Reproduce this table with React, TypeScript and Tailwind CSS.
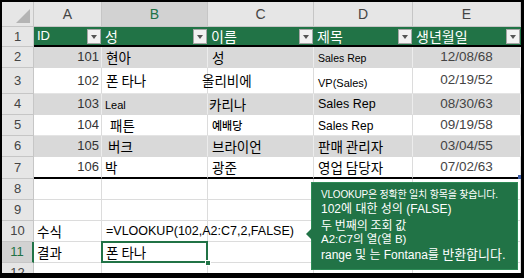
import React from 'react';

const COLS = ['w-[68px]', 'w-[106px]', 'w-[106px]', 'w-[99px]', 'w-[108px]'];
const LETTERS = ['A', 'B', 'C', 'D', 'E'];
const KR = "font-['Noto_Sans_CJK_KR',sans-serif]";
const LAT = "font-['Liberation_Sans','Noto_Sans_CJK_KR',sans-serif]";

type Row = {
  id: string;
  cells: React.ReactNode[];
  h: string;
  band: boolean;
};

const FilterBtn = () => (
  <div className="absolute right-[1px] top-[2px] w-[14px] h-[15px] bg-[#f2f2f2] border border-[#a6a6a6] flex items-center justify-center">
    <div className="w-0 h-0 border-l-[3px] border-r-[3px] border-t-[4px] border-l-transparent border-r-transparent border-t-[#555]" />
  </div>
);

const rows: Row[] = [
  {
    id: '2',
    h: 'h-[21px]',
    band: true,
    cells: [
      <span className={`${LAT} text-[13px] text-[#333] ml-auto pr-[2px]`}>101</span>,
      <span className={`${KR} text-[13.5px] pl-[4px]`}>현아</span>,
      <span className={`${KR} text-[13.5px] pl-[4px]`}>성</span>,
      <span className={`${LAT} text-[10.5px] pl-[4px] pt-[3px]`}>Sales Rep</span>,
      <span className={`${LAT} text-[13.5px] text-[#444] mx-auto`}>12/08/68</span>,
    ],
  },
  {
    id: '3',
    h: 'h-[26px]',
    band: false,
    cells: [
      <span className={`${LAT} text-[13px] text-[#333] ml-auto pr-[2px]`}>102</span>,
      <span className={`${KR} text-[13.5px] pl-[4px]`}>폰 타나</span>,
      <span className={`${KR} text-[13.5px] ml-[-6px]`}>올리비에</span>,
      <span className={`${LAT} text-[11px] pl-[4px] pt-[6px]`}>VP(Sales)</span>,
      <span className={`${LAT} text-[13.5px] text-[#444] mx-auto`}>02/19/52</span>,
    ],
  },
  {
    id: '4',
    h: 'h-[21px]',
    band: true,
    cells: [
      <span className={`${LAT} text-[13px] text-[#333] ml-auto pr-[2px]`}>103</span>,
      <span className={`${LAT} text-[11px] pl-[3px] pt-[2px]`}>Leal</span>,
      <span className={`${KR} text-[13.5px] pl-[1px]`}>카리나</span>,
      <span className={`${LAT} text-[12.5px] pl-[4px]`}>Sales Rep</span>,
      <span className={`${LAT} text-[13.5px] text-[#444] mx-auto`}>08/30/63</span>,
    ],
  },
  {
    id: '5',
    h: 'h-[21px]',
    band: false,
    cells: [
      <span className={`${LAT} text-[13px] text-[#333] ml-auto pr-[2px]`}>104</span>,
      <span className={`${KR} text-[13.5px] pl-[8px]`}>패튼</span>,
      <span className={`${KR} text-[11px] font-medium pl-[4px]`}>예배당</span>,
      <span className={`${LAT} text-[12px] pl-[4px] pt-[2px]`}>Sales Rep</span>,
      <span className={`${LAT} text-[13.5px] text-[#444] mx-auto`}>09/19/58</span>,
    ],
  },
  {
    id: '6',
    h: 'h-[21px]',
    band: true,
    cells: [
      <span className={`${LAT} text-[13px] text-[#333] ml-auto pr-[2px]`}>105</span>,
      <span className={`${KR} text-[13.5px] pl-[6px]`}>버크</span>,
      <span className={`${KR} text-[13.5px] pl-[4px]`}>브라이언</span>,
      <span className={`${KR} text-[13.5px] pl-[4px]`}>판매 관리자</span>,
      <span className={`${LAT} text-[13.5px] text-[#444] mx-auto`}>03/04/55</span>,
    ],
  },
  {
    id: '7',
    h: 'h-[22px]',
    band: false,
    cells: [
      <span className={`${LAT} text-[13px] text-[#333] ml-auto pr-[2px]`}>106</span>,
      <span className={`${KR} text-[13.5px] pl-[3px]`}>박</span>,
      <span className={`${KR} text-[13.5px] pl-[4px]`}>광준</span>,
      <span className={`${KR} text-[13.5px] pl-[4px]`}>영업 담당자</span>,
      <span className={`${LAT} text-[13.5px] text-[#444] mx-auto`}>07/02/63</span>,
    ],
  },
];

const RowHead = ({ n, h, selected }: { n: string; h: string; selected?: boolean }) => (
  <div
    className={`w-[32px] ${h} shrink-0 flex items-center justify-center ${LAT} text-[13px] border-b border-r ${
      selected
        ? 'bg-[#d2d2d2] text-[#217346] border-r-2 border-r-[#217346] border-b-[#c6c6c6]'
        : 'bg-[#e6e6e6] text-[#444] border-[#c6c6c6]'
    }`}
  >
    {n}
  </div>
);

export default function App() {
  return (
    <div className="w-[524px] h-[278px] bg-black pt-[2px] pl-[2px] pr-[3px] pb-[5px]">
      <div className="relative w-[519px] h-[271px] bg-white overflow-hidden">
        {/* column letters */}
        <div className="flex h-[25px]">
          <div className="w-[32px] shrink-0 bg-[#e6e6e6] border-r border-b border-[#c6c6c6] flex items-end justify-end p-[3px]">
            <svg width="14" height="14" viewBox="0 0 14 14">
              <polygon points="14,0 14,14 0,14" fill="#b4b4b4" />
            </svg>
          </div>
          {LETTERS.map((l, i) => (
            <div
              key={l}
              className={`${COLS[i]} shrink-0 flex items-center justify-center ${LAT} text-[14px] border-r border-b border-[#c6c6c6] ${
                l === 'B' ? 'bg-[#d2d2d2] text-[#217346]' : 'bg-[#e6e6e6] text-[#444]'
              }`}
            >
              {l}
            </div>
          ))}
        </div>

        {/* row 1: table header */}
        <div className="flex h-[20px]">
          <RowHead n="1" h="h-[20px]" />
          {['ID', '성', '이름', '제목', '생년월일'].map((t, i) => (
            <div
              key={t}
              className={`${COLS[i]} shrink-0 relative flex items-center bg-[#217346] text-white border-b-2 border-black pl-[3px] ${
                i === 0 ? LAT + ' text-[13px]' : KR + ' text-[14px]'
              }`}
            >
              {t}
              <FilterBtn />
            </div>
          ))}
        </div>

        {/* data rows */}
        {rows.map((r) => (
          <div key={r.id} className={`flex ${r.h}`}>
            <RowHead n={r.id} h={r.h} />
            {r.cells.map((c, i) => (
              <div
                key={i}
                className={`${COLS[i]} shrink-0 flex items-center whitespace-nowrap border-r ${
                  r.band ? 'bg-[#d9d9d9] border-[#ececec]' : 'bg-white border-[#dcdcdc]'
                } ${r.id === '7' ? 'border-b-2 border-b-black' : r.band ? 'border-b border-b-[#d9d9d9]' : 'border-b border-b-[#e4e4e4]'}`}
              >
                {c}
              </div>
            ))}
          </div>
        ))}

        {/* empty + formula rows */}
        {['8', '9', '10', '11', '12'].map((n) => (
          <div key={n} className="flex h-[21px]">
            <RowHead n={n} h="h-[21px]" selected={n === '11'} />
            {COLS.map((w, i) => (
              <div
                key={i}
                className={`${w} shrink-0 flex items-center whitespace-nowrap border-r border-b border-[#dcdcdc] ${
                  n === '11' && i === 1 ? 'relative' : ''
                }`}
              >
                {n === '10' && i === 0 && <span className={`${KR} text-[13.5px] pl-[3px]`}>수식</span>}
                {n === '10' && i === 1 && (
                  <span className={`${LAT} text-[12.5px] pl-[4px]`}>=VLOOKUP(102,A2:C7,2,FALSE)</span>
                )}
                {n === '11' && i === 0 && <span className={`${KR} text-[13.5px] pl-[3px]`}>결과</span>}
                {n === '11' && i === 1 && (
                  <>
                    <div className="absolute left-[-1px] top-[-1px] right-[-1px] bottom-[-1px] border-2 border-[#217346]" />
                    <div className="absolute right-[-4px] bottom-[-4px] w-[6px] h-[6px] bg-[#217346] border border-white" />
                    <span className={`${KR} text-[13.5px] pl-[4px]`}>폰 타나</span>
                  </>
                )}
              </div>
            ))}
          </div>
        ))}

        {/* table resize handle */}
        <div className="absolute left-[516px] top-[173px] w-[4px] h-[4px] bg-[#3b5ba5]" />

        {/* callout */}
        <div className="absolute left-[309px] top-[180px] w-[207px] h-[88px] bg-[#217346] border border-[#2e8b57] pl-[9px] pt-[4px] text-white">
          <div className="absolute left-[-6px] top-[45px] w-0 h-0 border-t-[6px] border-b-[6px] border-r-[6px] border-t-transparent border-b-transparent border-r-[#217346]" />
          <div className={`${LAT} text-[10px] leading-[15px] tracking-[-0.2px]`}>VLOOKUP은 정확한 일치 항목을 찾습니다.</div>
          <div className={`${LAT} text-[12px] leading-[15px]`}>102에 대한 성의 (FALSE)</div>
          <div className={`${KR} text-[12px] leading-[15px]`}>두 번째의 조회 값</div>
          <div className={`${LAT} text-[11.5px] leading-[15px]`}>A2:C7의 열(열 B)</div>
          <div className={`${LAT} text-[12px] leading-[15px]`}>
            range 및 는 Fontana를 <span className="text-[13px]">반환합니다.</span>
          </div>
        </div>
      </div>
    </div>
  );
}
